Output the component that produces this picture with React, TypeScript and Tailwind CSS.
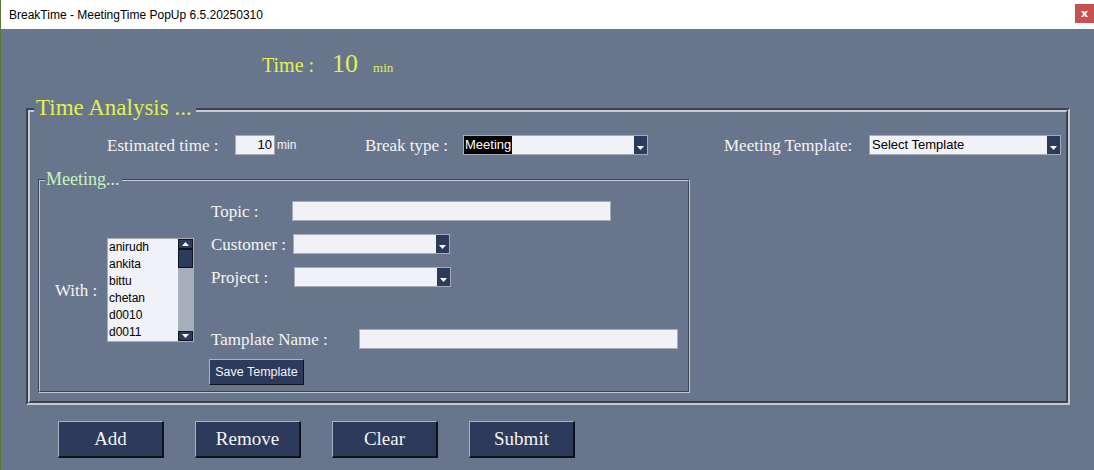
import React from 'react';

const SERIF = "font-['Liberation_Serif','Times_New_Roman',serif]";
const SANS = "font-['Liberation_Sans',Arial,sans-serif]";

const people = ['anirudh', 'ankita', 'bittu', 'chetan', 'd0010', 'd0011'];

function DropArrow() {
  return (
    <div className="flex h-full w-[13px] shrink-0 items-end justify-center bg-[#2c3a5b] pb-[3px]">
      <svg width="7" height="5" viewBox="0 0 7 5">
        <path d="M0 0h7L3.5 4z" fill="#fff" />
      </svg>
    </div>
  );
}

function Select({ width, children }: { width: string; children?: React.ReactNode }) {
  return (
    <div className={`flex h-[20px] ${width} shrink-0 items-stretch border border-[#a7abb3] bg-[#f0f2f7] ${SANS} text-[13px] text-black`}>
      <div className="flex flex-1 items-center overflow-hidden">{children}</div>
      <DropArrow />
    </div>
  );
}

function TextBox({ width, value }: { width: string; value?: string }) {
  return (
    <div className={`flex h-[20px] ${width} shrink-0 items-center justify-end border border-[#a7abb3] bg-[#f0f2f7] pr-[2px] ${SANS} text-[13px] text-black`}>
      {value}
    </div>
  );
}

function Label({ width, children }: { width: string; children: React.ReactNode }) {
  return <span className={`${width} shrink-0 ${SERIF} text-[17px] leading-none text-[#f4f4f4]`}>{children}</span>;
}

function ListBox() {
  return (
    <div className="flex h-[104px] w-[87px] shrink-0 border border-[#a7abb3] bg-[#f0f2f7]">
      <ul className={`flex-1 pl-[1px] ${SANS} text-[12px] leading-[17px] text-black`}>
        {people.map((p) => (
          <li key={p}>{p}</li>
        ))}
      </ul>
      <div className="flex w-[15px] flex-col bg-[#a6aebb]">
        <div className="flex h-[10px] items-center justify-center border border-[#11151d] bg-[#2c3a5b]">
          <svg width="7" height="4" viewBox="0 0 7 4">
            <path d="M0 4h7L3.5 0z" fill="#fff" />
          </svg>
        </div>
        <div className="h-[19px] border border-[#11151d] bg-[#2c3a5b]" />
        <div className="flex-1" />
        <div className="flex h-[10px] items-center justify-center border border-[#11151d] bg-[#2c3a5b]">
          <svg width="7" height="4" viewBox="0 0 7 4">
            <path d="M0 0h7L3.5 4z" fill="#fff" />
          </svg>
        </div>
      </div>
    </div>
  );
}

function BigButton({ label }: { label: string }) {
  return (
    <button
      className={`h-[37px] w-[106px] shrink-0 border-l border-t border-b-2 border-r-2 border-l-[#a9b2c4] border-t-[#a9b2c4] border-b-[#0e1118] border-r-[#0e1118] bg-[#2c3a5b] ${SERIF} text-[19px] text-[#f4f4f4]`}
    >
      {label}
    </button>
  );
}

export default function App() {
  return (
    <div className="flex h-[470px] w-[1094px] flex-col overflow-hidden border-l border-[#567a33] bg-[#68768d]">
      {/* title bar */}
      <div className="flex h-[29px] shrink-0 items-center justify-between bg-white pl-[8px]">
        <span className={`${SANS} text-[12px] text-black`}>BreakTime - MeetingTime PopUp 6.5.20250310</span>
        <div className="mb-[3px] flex h-[19px] w-[19px] items-center justify-center bg-[#c75050] font-['DejaVu_Sans',sans-serif] text-[11px] font-bold leading-none text-white">
          x
        </div>
      </div>

      {/* time */}
      <div className={`mt-[22px] flex items-baseline pl-[261px] ${SERIF} leading-none text-[#e3f04e]`}>
        <span className="text-[20px]">Time :</span>
        <span className="ml-[18px] text-[26px]">10</span>
        <span className="ml-[15px] text-[13px]">min</span>
      </div>

      {/* Time Analysis */}
      <div className="relative ml-[25px] mt-[31px] h-[297px] w-[1044px] shrink-0 border-2 border-b-[#c4c9d2] border-l-[#3d4350] border-r-[#c4c9d2] border-t-[#3d4350]">
        <span className={`absolute -top-[14px] left-[6px] bg-[#68768d] pl-[2px] pr-[4px] ${SERIF} text-[23px] leading-none text-[#e3f04e]`}>
          Time Analysis ...
        </span>
        <div className="h-full border-2 border-b-[#3d4350] border-l-[#c4c9d2] border-r-[#3d4350] border-t-[#c4c9d2]">
          <div className="mt-[23px] flex h-[20px] items-center pl-[77px]">
            <Label width="w-[128px]">Estimated time :</Label>
            <TextBox width="w-[40px]" value="10" />
            <span className={`ml-[2px] w-[88px] ${SANS} text-[12px] text-[#f4f4f4]`}>min</span>
            <Label width="w-[98px]">Break type :</Label>
            <Select width="w-[185px]">
              <span className="flex h-full items-center bg-black pl-[1px] pr-[1px] text-white">Meeting</span>
            </Select>
            <Label width="w-[145px] ml-[76px]">Meeting Template:</Label>
            <Select width="w-[192px]">
              <span className="pl-[2px]">Select Template</span>
            </Select>
          </div>

          {/* Meeting... */}
          <div className="relative ml-[8px] mt-[24px] h-[214px] w-[652px] border border-b-[#c4c9d2] border-l-[#3d4350] border-r-[#c4c9d2] border-t-[#3d4350]">
            <span className={`absolute -top-[10px] left-[6px] bg-[#68768d] pl-[1px] pr-[2px] ${SERIF} text-[18px] leading-none text-[#c9f2c4]`}>
              Meeting...
            </span>
            <div className="flex h-full border border-b-[#3d4350] border-l-[#c4c9d2] border-r-[#3d4350] border-t-[#c4c9d2] pl-[15px]">
              <div className="mt-[57px] flex h-[104px] items-center">
                <Label width="w-[52px]">With :</Label>
                <ListBox />
              </div>
              <div className="ml-[15px] flex flex-col pt-[20px]">
                <div className="flex h-[20px] items-center">
                  <Label width="w-[83px] pl-[2px]">Topic :</Label>
                  <TextBox width="w-[319px]" />
                </div>
                <div className="mt-[13px] flex h-[20px] items-center">
                  <Label width="w-[84px] pl-[2px]">Customer :</Label>
                  <Select width="w-[157px]" />
                </div>
                <div className="mt-[13px] flex h-[20px] items-center">
                  <Label width="w-[85px] pl-[2px]">Project :</Label>
                  <Select width="w-[157px]" />
                </div>
                <div className="mt-[42px] flex h-[20px] items-center">
                  <Label width="w-[150px] pl-[2px]">Tamplate Name :</Label>
                  <TextBox width="w-[319px]" />
                </div>
                <button
                  className={`mt-[10px] h-[26px] w-[95px] border border-b-[#0e1118] border-l-[#a9b2c4] border-r-[#0e1118] border-t-[#a9b2c4] bg-[#2c3a5b] ${SANS} text-[12.5px] text-[#f4f4f4]`}
                >
                  Save Template
                </button>
              </div>
            </div>
          </div>
        </div>
      </div>

      {/* actions */}
      <div className="mt-[16px] flex gap-[31px] pl-[57px]">
        <BigButton label="Add" />
        <BigButton label="Remove" />
        <BigButton label="Clear" />
        <BigButton label="Submit" />
      </div>
    </div>
  );
}
